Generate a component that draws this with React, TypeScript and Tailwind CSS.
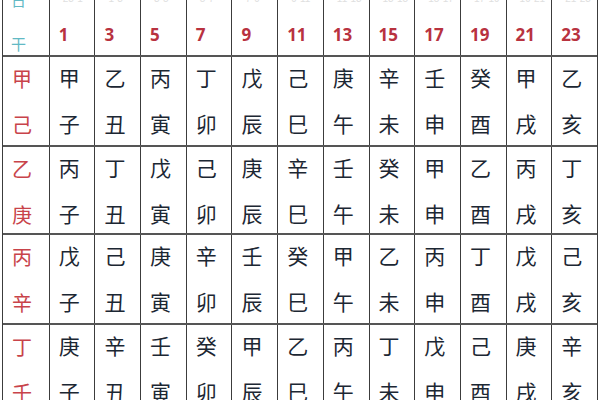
const hours = ["1", "3", "5", "7", "9", "11", "13", "15", "17", "19", "21", "23"];
const ranges = ["23-1", "1-3", "3-5", "5-7", "7-9", "9-11", "11-13", "13-15", "15-17", "17-19", "19-21", "21-23"];
const branches = ["子", "丑", "寅", "卯", "辰", "巳", "午", "未", "申", "酉", "戌", "亥"];

const rows = [
  { day: ["甲", "己"], stems: "甲乙丙丁戊己庚辛壬癸甲乙" },
  { day: ["乙", "庚"], stems: "丙丁戊己庚辛壬癸甲乙丙丁" },
  { day: ["丙", "辛"], stems: "戊己庚辛壬癸甲乙丙丁戊己" },
  { day: ["丁", "壬"], stems: "庚辛壬癸甲乙丙丁戊己庚辛" },
];

const cjk = "font-['Noto_Sans_CJK_SC',sans-serif]";

export default function App() {
  return (
    <div className="w-[600px] h-[400px] overflow-hidden bg-white">
      <div className="ml-[2px] w-[596px] border-l border-r border-[#3c3c3c]">
        {/* header, its top line is cut by the picture edge */}
        <div className="grid grid-cols-13 h-[55px] overflow-hidden">
          <div className={`h-[55px] flex flex-col items-start pl-[8px] text-[#62b9c4] ${cjk}`}>
            <span className="text-[15px] leading-[15px] -mt-[8px]">日</span>
            <span className="text-[15px] leading-[18px] mt-[28px]">干</span>
          </div>
          {hours.map((h, i) => (
            <div key={h} className="h-[55px] flex flex-col items-start pl-[9px] border-l border-[#3c3c3c]">
              <span className="text-[10px] leading-[12px] text-[#e0e0e0] -mt-[7px] pl-[4px] font-['Liberation_Sans',sans-serif]">
                {ranges[i]}
              </span>
              <span className="text-[17px] leading-[20px] mt-[20px] font-bold text-[#b8323f] font-['Open_Sans',sans-serif]">
                {h}
              </span>
            </div>
          ))}
        </div>
        {rows.map((row, r) => (
          <div
            key={r}
            className={`grid grid-cols-13 border-t-2 border-[#555] ${r === 1 ? "h-[88px]" : "h-[90px]"}`}
          >
            <div className={`flex flex-col items-start pl-[9px] pt-[10px] gap-[22px] text-[#c8434a] ${cjk}`}>
              <span className="text-[20px] leading-[24px]">{row.day[0]}</span>
              <span className="text-[20px] leading-[24px]">{row.day[1]}</span>
            </div>
            {branches.map((b, i) => (
              <div
                key={b}
                className={`flex flex-col items-start pl-[9px] pt-[8px] gap-[21px] border-l border-[#3c3c3c] text-[#1c2733] ${cjk}`}
              >
                <span className="text-[21px] leading-[25px]">{row.stems[i]}</span>
                <span className="text-[21px] leading-[25px]">{b}</span>
              </div>
            ))}
          </div>
        ))}
      </div>
    </div>
  );
}
